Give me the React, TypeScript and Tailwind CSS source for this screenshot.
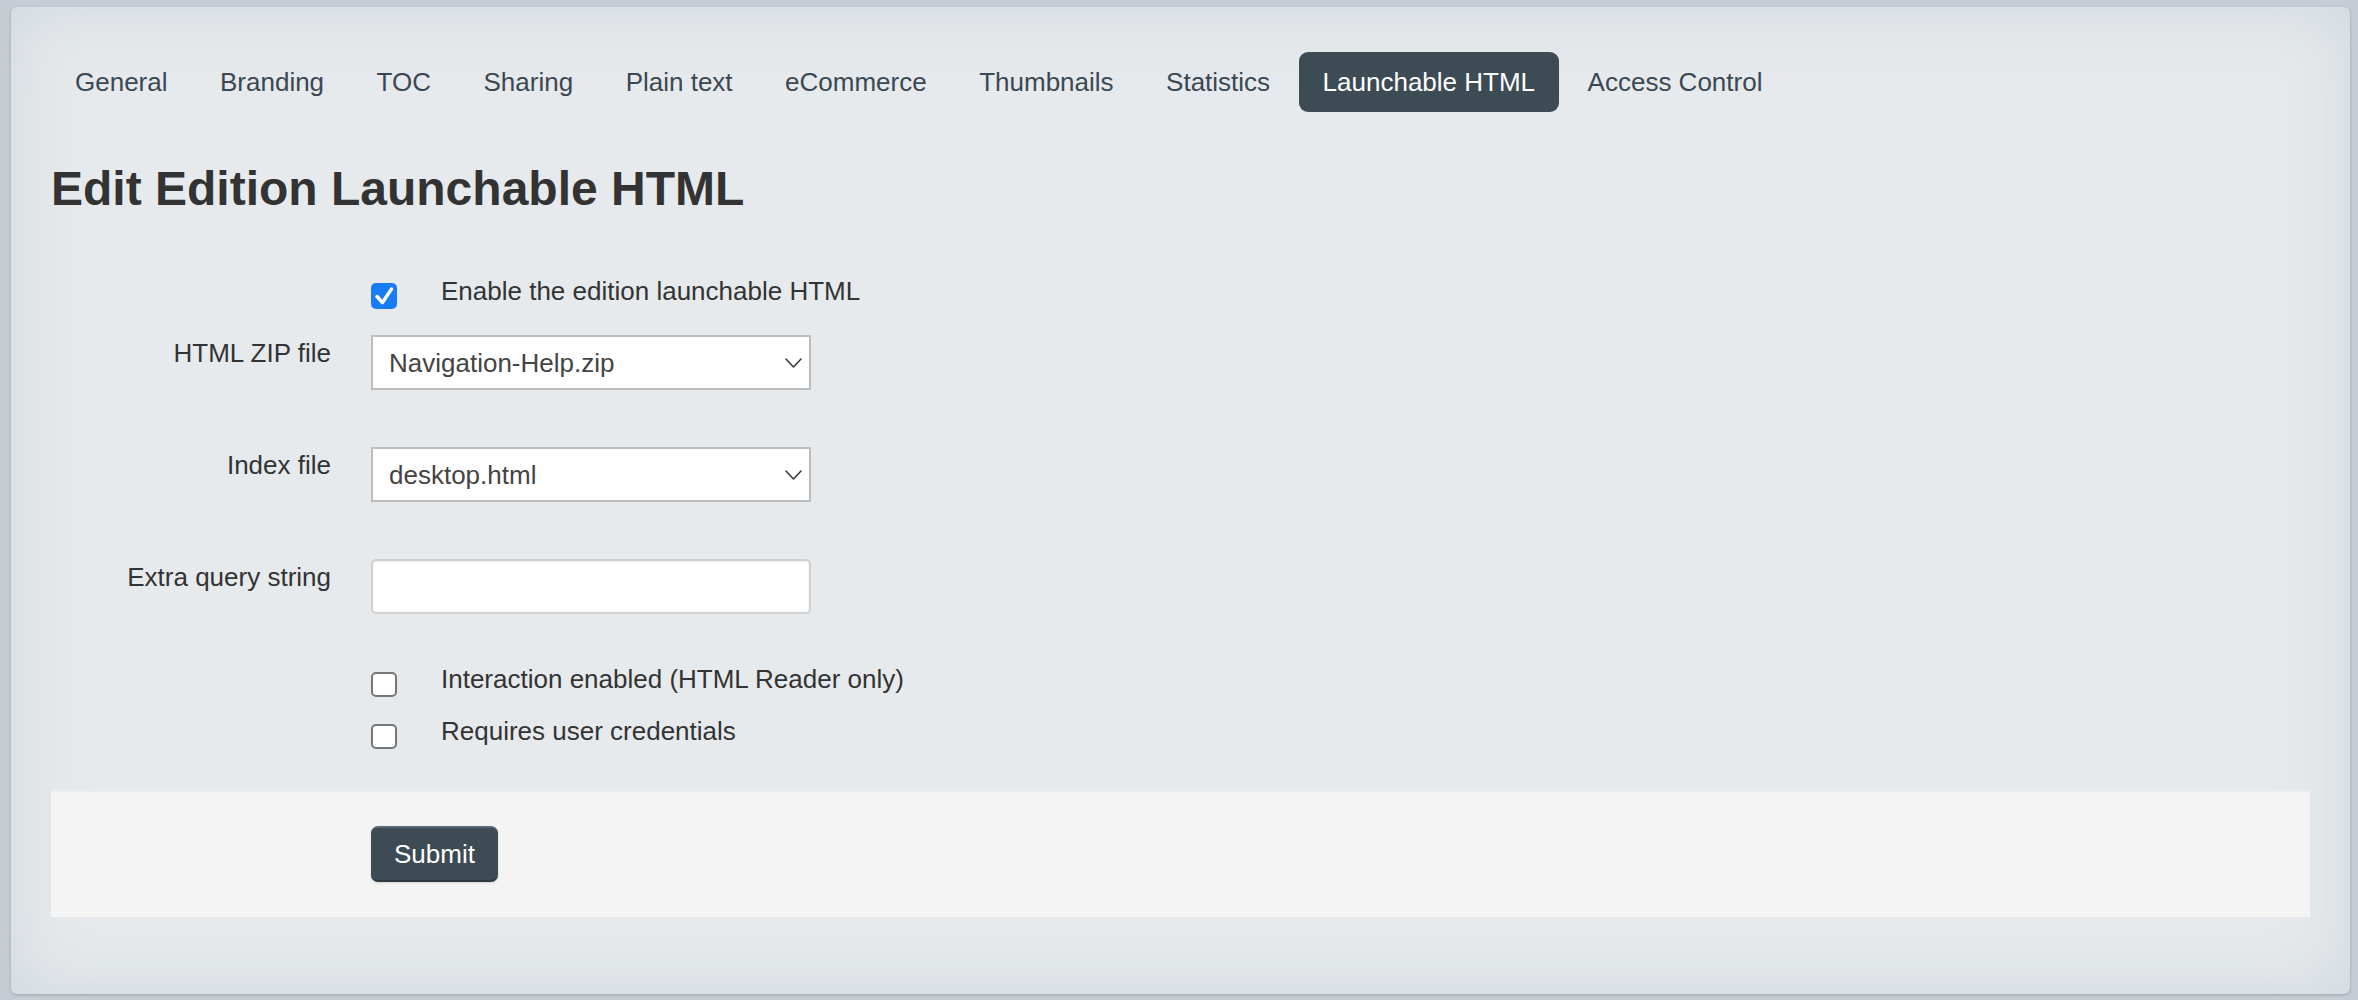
import React from "react";

const tabs = [
  "General",
  "Branding",
  "TOC",
  "Sharing",
  "Plain text",
  "eCommerce",
  "Thumbnails",
  "Statistics",
  "Launchable HTML",
  "Access Control",
];

function Check({ checked }: { checked?: boolean }) {
  if (checked) {
    return (
      <span className="mt-[10px] flex h-[26px] w-[26px] shrink-0 items-center justify-center rounded-[5px] bg-[#1a7bf6]">
        <svg width="26" height="26" viewBox="0 0 26 26">
          <polyline
            points="6,13.5 11.5,19.5 20.5,6"
            fill="none"
            stroke="#ffffff"
            strokeWidth="3.4"
            strokeLinecap="round"
            strokeLinejoin="round"
          />
        </svg>
      </span>
    );
  }
  return (
    <span className="mt-[11px] block h-[25px] w-[26px] shrink-0 rounded-[5px] border-2 border-[#767676] bg-white" />
  );
}

function Chevron() {
  return (
    <svg width="17" height="10" viewBox="0 0 17 10" className="shrink-0">
      <polyline points="1,1 8.5,9 16,1" fill="none" stroke="#3a3a3a" strokeWidth="1.6" strokeLinecap="round" strokeLinejoin="round" />
    </svg>
  );
}

function SelectBox({ value }: { value: string }) {
  return (
    <div className="flex h-[55px] w-[440px] items-center justify-between border-2 border-[#bdbdbd] bg-white pl-[16px] pr-[7px] text-[26px] leading-[36px] text-[#444]">
      <span>{value}</span>
      <Chevron />
    </div>
  );
}

export default function App() {
  return (
    <div
      className="min-h-screen bg-[#c5ccd3] pb-[6px] pl-[11px] pr-[8px] pt-[7px]"
      style={{ fontFamily: '"Liberation Sans", Arial, Helvetica, sans-serif' }}
    >
      <div className="rounded-[6px] bg-[#e6eaed] px-[40px] pb-[77px] pt-[45px] shadow-[inset_0_0_70px_rgba(170,180,190,0.35),0_1px_3px_rgba(80,90,100,0.35)]">
        <nav className="flex gap-[4.5px]">
          {tabs.map((t) => {
            const active = t === "Launchable HTML";
            return (
              <div
                key={t}
                className={
                  active
                    ? "flex h-[60px] items-center rounded-[9px] bg-[#3d4b55] px-[24px] text-[26px] leading-[36px] text-white"
                    : "flex h-[60px] items-center rounded-[9px] px-[24px] text-[26px] leading-[36px] text-[#3b4852]"
                }
              >
                {t}
              </div>
            );
          })}
        </nav>

        <h1 className="mt-[51px] text-[48px] font-bold leading-[52px] text-[#333333]">
          Edit Edition Launchable HTML
        </h1>

        <form className="mt-[58px] text-[26px] leading-[36px] text-[#333333]">
          <div className="flex">
            <div className="w-[280px] shrink-0" />
            <div className="ml-[40px] flex items-start gap-[44px]">
              <Check checked />
              <span>Enable the edition launchable HTML</span>
            </div>
          </div>

          <div className="mt-[26px] flex">
            <label className="w-[280px] shrink-0 text-right">HTML ZIP file</label>
            <div className="ml-[40px]">
              <SelectBox value="Navigation-Help.zip" />
            </div>
          </div>

          <div className="mt-[57px] flex">
            <label className="w-[280px] shrink-0 text-right">Index file</label>
            <div className="ml-[40px]">
              <SelectBox value="desktop.html" />
            </div>
          </div>

          <div className="mt-[57px] flex">
            <label className="w-[280px] shrink-0 text-right">Extra query string</label>
            <div className="ml-[40px]">
              <div className="h-[55px] w-[440px] rounded-[5px] border-2 border-[#d0d0d0] bg-white shadow-[inset_0_1px_2px_rgba(0,0,0,0.08)]" />
            </div>
          </div>

          <div className="mt-[47px] flex">
            <div className="w-[280px] shrink-0" />
            <div className="ml-[40px] flex items-start gap-[44px]">
              <Check />
              <span>Interaction enabled (HTML Reader only)</span>
            </div>
          </div>

          <div className="mt-[16px] flex">
            <div className="w-[280px] shrink-0" />
            <div className="ml-[40px] flex items-start gap-[44px]">
              <Check />
              <span>Requires user credentials</span>
            </div>
          </div>

          <div className="mt-[41px] border-t-2 border-[#eaeced] bg-[#f4f4f4] pb-[35px] pl-[320px] pt-[34px]">
            <button
              type="button"
              className="h-[56px] rounded-[7px] border-t-2 border-b-2 border-t-[#5b6a74] border-b-[#2e3a42] bg-[#3d4b55] px-[23px] text-[26px] leading-[36px] text-white shadow-[0_1px_2px_rgba(0,0,0,0.15)]"
            >
              Submit
            </button>
          </div>
        </form>
      </div>
    </div>
  );
}
